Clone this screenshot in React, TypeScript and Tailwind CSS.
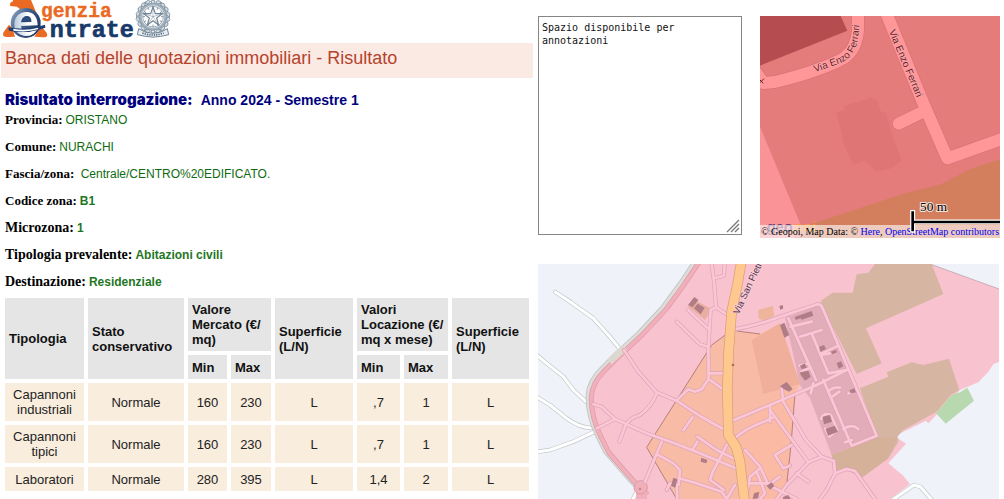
import React from "react";

type Field = { label: string; value: string; strong?: boolean; large?: boolean };

const fields: Field[] = [
  { label: "Provincia:", value: "ORISTANO" },
  { label: "Comune:", value: "NURACHI" },
  { label: "Fascia/zona:", value: "\u00a0Centrale/CENTRO%20EDIFICATO." },
  { label: "Codice zona:", value: "B1", strong: true },
  { label: "Microzona:", value: "1", strong: true, large: true },
  { label: "Tipologia prevalente:", value: "Abitazioni civili", strong: true, large: true },
  { label: "Destinazione:", value: "Residenziale", strong: true, large: true },
];

const rows: string[][] = [
  ["Capannoni industriali", "Normale", "160", "230", "L", ",7", "1", "L"],
  ["Capannoni tipici", "Normale", "160", "230", "L", ",7", "1", "L"],
  ["Laboratori", "Normale", "280", "395", "L", "1,4", "2", "L"],
];

const spokes = [0, 30, 60, 90, 120, 150, 180, 210, 240, 270, 300, 330];
const leaves = [20, 40, 60, 80, 100, 120, 140, 160];

function Logo() {
  return (
    <svg viewBox="0 0 600 129" className="block h-[43px] w-[200px]" role="img" aria-label="Agenzia Entrate">
      <defs>
        <linearGradient id="ball" x1="0" y1="0" x2="1" y2="0.6">
          <stop offset="0" stopColor="#9db0c6" />
          <stop offset="0.45" stopColor="#46648f" />
          <stop offset="1" stopColor="#1b3566" />
        </linearGradient>
        <linearGradient id="shine" x1="0" y1="0" x2="1" y2="0">
          <stop offset="0" stopColor="#b9cadb" />
          <stop offset="0.6" stopColor="#ffffff" />
        </linearGradient>
      </defs>
      <path d="M36 0H90L104 34L120 64L104 58L88 30L60 30L48 20L28 18Q24 8 36 4Z" fill="#ea6a24" />
      <path d="M24 74L8 96Q0 112 22 111L42 110L34 84Z" fill="#ea6a24" />
      <path d="M118 76L137 98Q144 113 124 112L100 110L112 92Z" fill="#ea6a24" />
      <circle cx="74" cy="69" r="45" fill="url(#ball)" />
      <path d="M40 74C40 46 60 34 80 36C100 38 110 54 110 76L60 78C62 92 72 97 84 96C92 95 98 91 101 87L109 88C100 104 88 108 76 108C54 107 40 94 40 74Z" fill="url(#shine)" />
      <path d="M60 67C62 52 72 47 80 48C88 49 92 57 91 66Z" fill="#2b4a7a" />
      <path d="M22 82Q72 92 132 74L133 83Q76 103 24 92Z" fill="#1d3d70" />
      <path d="M36 86Q74 93 112 83L111 88Q76 98 38 92Z" fill="#ffffff" />
      <g fontFamily="'Liberation Mono', monospace" fontWeight="700">
        <text x="120" y="52" fontSize="59" fill="#ea6a24" stroke="#ea6a24">genzia</text>
        <text x="146" y="111" fontSize="70" fill="#183a6b" stroke="#183a6b" strokeWidth="2">ntrate</text>
      </g>
      <g transform="translate(456 50)" fill="none" stroke="#6f8496">
        <circle r="37" strokeWidth="7" stroke="#a6b4bf" />
        <circle r="41" strokeWidth="2" />
        <circle r="31" strokeWidth="2" />
        {spokes.map((a) => (
          <path key={a} transform={`rotate(${a})`} d="M-4 -40V-49H4V-40M0 -31V-24" strokeWidth="2.5" />
        ))}
        {leaves.map((a) => (
          <g key={a} strokeWidth="2">
            <path transform={`rotate(${a})`} d="M-8 -44Q0 -58 9 -45Q0 -38 -8 -44" fill="#d3dce2" />
            <path transform={`rotate(${-a})`} d="M-8 -44Q0 -58 9 -45Q0 -38 -8 -44" fill="#d3dce2" />
          </g>
        ))}
        <path d="M0 -29L7 -9L28 -9L11 4L17 25L0 12L-17 25L-11 4L-28 -9L-7 -9Z" fill="#ffffff" strokeWidth="3.5" />
        <path d="M0 -29V0L17 25M0 0L-17 25M0 0L28 -9M0 0L-28 -9" strokeWidth="1.5" />
        <path d="M-43 36L-24 46Q0 54 24 46L43 36L47 54L23 59Q0 64 -23 59L-47 54Z" fill="#e6ecf0" strokeWidth="3" />
        <path d="M-32 49Q0 61 32 49" strokeWidth="5" strokeDasharray="4 3" stroke="#50687c" />
      </g>
    </svg>
  );
}

function DetailMap() {
  return (
    <figure className="relative self-start overflow-hidden">
      <svg viewBox="30 18 720 666" className="block w-full" aria-label="Mappa di dettaglio">
        <rect x="30" y="18" width="720" height="666" fill="#e47c7c" />
        <path d="M30 18H272L292 62L30 167Z" fill="#b54c4f" />
        <path d="M30 350L150 640L130 684H30Z" fill="#fa9397" />
        <path d="M750 448L660 478L570 524L470 548L160 650V684H750Z" fill="#d37e5d" />
        <path d="M258 308L285 298L282 288L352 268L358 262L380 272L392 304L408 310L428 378L455 452L425 475L380 484L345 452L310 463L282 405L270 350Z" fill="#df7675" />
        <g fill="none" strokeLinejoin="round" strokeLinecap="round">
          <g stroke="#d87077" strokeWidth="40">
            <path d="M324 0V60Q320 115 285 142Q220 180 75 216L40 219L20 190" />
            <path d="M405 0L520 280L592 445L770 382M520 305L446 341" />
          </g>
          <g stroke="#ff9799" strokeWidth="36">
            <path d="M324 0V60Q320 115 285 142Q220 180 75 216L40 219L20 190" />
            <path d="M405 0L520 280L592 445L770 382M520 305L446 341" />
          </g>
        </g>
        <path id="curve-west" d="M195 187L270 160Q314 140 323 92L333 10" fill="none" />
        <path id="curve-east" d="M416 64L520 310" fill="none" />
        <g fontFamily="'Liberation Sans', sans-serif" fontSize="30" fill="#64202b" stroke="#ffb0b0" strokeWidth="3" paintOrder="stroke">
          <text><textPath href="#curve-west">Via Enzo Ferrari</textPath></text>
          <text><textPath href="#curve-east">Via Enzo Ferrari</textPath></text>
        </g>
        <path d="M28 208L40 220M30 218L42 206" stroke="#64202b" strokeWidth="3" />
        <g fontFamily="'Liberation Sans', sans-serif" fontSize="44" fontWeight="700">
          <text x="50" y="667" fill="#6b3f6c">geo</text>
          <text x="132" y="667" fill="#f09a3e">poi</text>
        </g>
      </svg>
      <figcaption className="absolute inset-x-0 bottom-0 bg-white/60 text-center font-['Liberation_Serif',serif] text-[10px] leading-[13px] whitespace-nowrap text-black">
        © Geopoi, Map Data: © <a href="#here" className="text-[#0000ee]">Here</a>,{" "}
        <a href="#openstreetmap" className="text-[#0000ee]">OpenStreetMap contributors</a>
      </figcaption>
      <svg viewBox="30 18 720 666" className="pointer-events-none absolute inset-0 w-full" aria-hidden="true">
        <g fill="none">
          <path d="M488 600V668M488 636H760" stroke="#ffffff" strokeWidth="15" />
          <path d="M488 604V664M488 636H760" stroke="#000000" strokeWidth="8" />
        </g>
        <text x="510" y="602" fontFamily="'Liberation Serif', serif" fontSize="40" stroke="#ffffff" strokeWidth="6" strokeOpacity="0.75" paintOrder="stroke">50 m</text>
      </svg>
    </figure>
  );
}

const ruralRoads = [
  "M76 111L120 140L190 190L235 240L268 280",
  "M10 292L50 325L100 365L130 405L168 440",
  "M10 420L60 450L110 490Q150 520 190 519",
  "M10 592L60 585L130 560L200 527",
  "M1080 740L1152 690L1172 696L1210 740",
  "M318 715L305 740",
];

const townRoads = [
  "M282 285L325 350L380 412L440 437L510 483L590 528",
  "M190 448L215 455L255 492L350 535L440 567L510 595L630 645",
  "M200 520L255 492M380 415Q365 455 330 480Q295 490 285 515L268 560",
  "M545 27L552 80L558 157L590 178M552 70L582 62L584 27",
  "M558 157L542 165L535 280L536 372L515 403L495 410L474 403L440 437",
  "M536 372L575 400M538 355H580M474 165L535 222M440 200L510 268L535 275",
  "M488 487L460 526M395 560L345 680M385 600L430 625L450 645L446 690L420 685L410 705",
  "M446 670L500 685L575 710L590 732M440 690L442 732",
  "M502 545L560 585L610 610M502 560L490 580M590 570L575 600L548 650L540 675L582 705",
  "M615 690L590 732M612 495L720 450L860 390L950 345",
  "M615 550Q640 525 690 505L728 488M720 452V500",
  "M615 222Q670 215 750 185L862 148Q873 146 878 160L1040 542L965 572L880 375",
  "M775 190L858 375M782 215L845 200M810 245L875 225M845 235L895 355M870 298L925 272",
  "M874 299L900 295M895 355L950 345M808 332L835 326M812 350L842 338",
  "M755 400L760 440L828 555L875 605L912 618L915 655L890 705L870 732",
  "M875 605L835 622L720 465M835 622L770 690L740 732M800 655L835 680",
  "M780 632L760 640L735 600L785 570",
  "M645 585L690 635L715 690L800 732M645 685H720M690 640L660 665L650 720",
  "M680 650L705 715L690 732M715 690L750 665",
  "M915 655L950 642L975 648L1005 690L1035 732",
  "M850 385L842 415M895 410Q905 395 930 398M908 424L928 410M955 416L978 404",
  "M873 492Q880 472 903 480L922 525L898 545L885 520",
  "M940 522Q965 505 985 522M945 562L965 555",
];

const buildings = [
  "M474 150L493 126L505 135L488 157Z",
  "M492 160L503 146L524 158L512 178Z",
  "M514 608L532 615L529 625L512 620Z",
  "M430 668L442 673L436 698L423 692Z",
  "M672 715L688 710L684 730L668 732Z",
  "M748 153L758 150L760 160L751 165Z",
  "M794 186L845 168L850 182L815 194L812 190L797 195Z",
  "M750 210L763 203L778 240L763 248Z",
  "M868 275L882 270L888 282L870 290Z",
  "M903 290L918 284L921 292L907 298Z",
  "M920 324L933 319L940 334L926 341Z",
  "M810 332L825 325L830 338L815 342Z",
  "M810 352L835 347L842 366L825 377L812 360Z",
  "M750 394L770 381L788 402L778 410L765 404Z",
  "M958 406L974 400L978 412L962 415Z",
  "M878 485L900 480L906 500L882 508Z",
  "M887 522L914 512L924 530L894 542Z",
  "M710 692L725 682L733 693L720 704Z",
  "M760 725L775 720L782 732H758Z",
];

function Roads({ list, casing, fill, width }: { list: string[]; casing: string; fill: string; width: number }) {
  return (
    <g fill="none" strokeLinecap="round" strokeLinejoin="round">
      {list.map((d) => (
        <path key={d} d={d} stroke={casing} strokeWidth={width + 4} />
      ))}
      {list.map((d) => (
        <path key={d} d={d} stroke={fill} strokeWidth={width} />
      ))}
    </g>
  );
}

function ZoneMap() {
  const belt = "M505 10L455 85L400 160L330 235L255 305L215 345Q180 380 177 420Q175 480 205 540L230 590L300 670L345 715";
  const main = "M636 10L622 90L605 170L596 290L592 400L595 540L618 575L630 620L645 750";
  return (
    <svg viewBox="24 27 1383 705" className="block w-full" aria-label="Mappa della zona omogenea">
      <rect x="24" y="27" width="1383" height="705" fill="#eff2f9" />
      <Roads list={ruralRoads} casing="#c3c7c9" fill="#ffffff" width={9} />
      <path
        d="M508 27L455 95L400 165L330 240L255 310L205 355Q178 390 177 440Q180 490 205 545L230 595L300 675L345 732H1080L1140 688L1120 662L1075 625L1128 566L1102 548L1105 538L1188 497L1195 505L1290 405L1345 382L1375 350L1390 328L1407 320V102L1200 27Z"
        fill="#f8c3cf"
      />
      <path d="M1200 27L1407 102" stroke="#c9aebb" strokeWidth="3" />
      <path d="M590 237L545 270L350 577L440 732H740L770 690L783 570L795 415L810 390L750 205L690 237L610 228Z" fill="#f8bba6" />
      <path d="M690 440L795 400L783 570L770 690L750 732H640L620 560Z" fill="#fabaa3" />
      <path d="M590 237L545 270L350 577L440 732M770 690L783 570L795 415M690 237L620 228" fill="none" stroke="#b77f7c" strokeWidth="3" />
      <path d="M665 255L750 205L810 387L700 417Z" fill="#f0af9b" />
      <path d="M685 165L728 152L733 182L700 198L685 188Z" fill="#efb49c" />
      <path d="M488 132L545 162L525 195L474 155Z" fill="#e8ae9f" />
      <path d="M765 188L870 150L1040 545L905 600L840 430L810 390Z" fill="#e2acb9" />
      <path d="M873 137L908 113H968L980 58L1015 53L1035 27H1205L1240 117L1008 220L1055 325L980 357L880 160Z" fill="#d6b5a3" />
      <path d="M990 400L1075 365L1070 352L1145 322L1180 330L1257 311L1288 405L1262 420L1220 470L1120 525L1102 545L1105 560L1075 610L995 668L945 640L915 655L905 600L1040 545Z" fill="#d6b5a3" />
      <path d="M905 600L1040 548L1102 548L1075 610L995 668L945 640L915 655Z" fill="#d4b198" />
      <path d="M1218 475L1265 420L1290 412L1312 398L1332 437L1247 506Z" fill="#b8d9b0" />
      <g fill="none" strokeLinejoin="round">
        <path d={belt} stroke="#c2c3c1" strokeWidth="20" />
        <path d={belt} stroke="#dddeda" strokeWidth="15" />
        <path d={belt} transform="translate(7 4)" stroke="#dc99a9" strokeWidth="15" />
        <path d={belt} transform="translate(7 4)" stroke="#f1afba" strokeWidth="11" />
        <path d="M285 277L238 320" stroke="#dcd7cf" strokeWidth="20" />
      </g>
      <path d="M318 732V680L345 685L352 732Z" fill="#f1afba" />
      <circle cx="332" cy="697" r="20" fill="#f1afba" stroke="#dc99a9" strokeWidth="3" />
      <circle cx="330" cy="702" r="4" fill="#c98795" />
      <Roads list={townRoads} casing="#dda2b8" fill="#fbc7d4" width={8} />
      <g fill="none" strokeLinejoin="round">
        <path d={main} stroke="#d99b78" strokeWidth="31" />
        <path d={main} stroke="#fec88e" strokeWidth="27" />
      </g>
      <g fill="#b07c86">
        {buildings.map((d) => (
          <path key={d} d={d} />
        ))}
      </g>
      <circle cx="609" cy="330" r="4" fill="#a96c55" />
      <text
        transform="translate(626 180) rotate(-65)"
        fontFamily="'Liberation Sans', sans-serif"
        fontSize="29"
        fill="#54304a"
        stroke="#fbd3dc"
        strokeWidth="4"
        paintOrder="stroke"
      >
        Via San Pietro
      </text>
    </svg>
  );
}

function QuotationTable() {
  const head = "bg-[#e5e5e5] px-1 py-1 text-left font-bold";
  return (
    <table className="w-full table-fixed border-separate border-spacing-1 text-[13px] leading-[15px] text-[#111]">
      <colgroup>
        <col className="w-[79px]" />
        <col className="w-[96px]" />
        <col className="w-[39px]" />
        <col className="w-[40px]" />
        <col className="w-[78px]" />
        <col className="w-[43px]" />
        <col className="w-[44px]" />
        <col className="w-[77px]" />
      </colgroup>
      <thead>
        <tr className="h-[53px]">
          <th rowSpan={2} className={head}>Tipologia</th>
          <th rowSpan={2} className={head}>Stato conservativo</th>
          <th colSpan={2} className={head}>Valore Mercato (€/<wbr />mq)</th>
          <th rowSpan={2} className={head}>Superficie (L/N)</th>
          <th colSpan={2} className={head}>Valori Locazione (€/<wbr />mq x mese)</th>
          <th rowSpan={2} className={head}>Superficie (L/N)</th>
        </tr>
        <tr className="h-6">
          <th className={head}>Min</th>
          <th className={head}>Max</th>
          <th className={head}>Min</th>
          <th className={head}>Max</th>
        </tr>
      </thead>
      <tbody className="text-center text-[#222]">
        {rows.map((row) => (
          <tr key={row[0]} className="h-6">
            {row.map((cell, i) => (
              <td key={i} className="bg-[#f9eddd] px-1 py-1">{cell}</td>
            ))}
          </tr>
        ))}
      </tbody>
    </table>
  );
}

export default function App() {
  return (
    <div className="grid grid-cols-[532fr_462fr] gap-[5px] bg-white pr-1 pl-px font-['Liberation_Sans',sans-serif]">
      <main className="min-w-0">
        <Logo />
        <h1 className="bg-[#fbe9e4] px-1 pb-1 text-[18px] leading-[31px] text-[#b5432b]">
          Banca dati delle quotazioni immobiliari - Risultato
        </h1>
        <h2 className="flex items-baseline gap-2 px-1 pt-3 text-[14px] leading-5 font-bold text-[#00007f]">
          <span className="font-['Inter',sans-serif] text-[15px] font-black">Risultato interrogazione:</span>
          <span>Anno 2024 - Semestre 1</span>
        </h2>
        <dl className="px-1 pt-[2px] pb-1">
          {fields.map((f) => (
            <div key={f.label} className="flex items-baseline gap-[3px] pb-[11px] leading-4 last:pb-0">
              <dt className={f.large ? "font-['Liberation_Serif',serif] text-[14px] font-bold text-black" : "font-['Liberation_Serif',serif] text-[13px] font-bold text-black"}>
                {f.label}
              </dt>
              <dd className={f.strong ? "text-[12px] font-bold text-[#1f771f]" : "text-[12px] text-[#0f6b0f]"}>{f.value}</dd>
            </div>
          ))}
        </dl>
        <QuotationTable />
      </main>
      <aside className="min-w-0 pt-4">
        <div className="grid grid-cols-[204fr_240fr] gap-[18px]">
          <div className="relative mb-[3px]">
            <textarea
              aria-label="Annotazioni"
              defaultValue="Spazio disponibile per annotazioni"
              className="block h-full w-full resize-none rounded-none border border-[#858585] bg-white px-[3px] py-1 font-['DejaVu_Sans_Mono',monospace] text-[10px] leading-[13px] text-[#111]"
            />
            <svg viewBox="0 0 14 14" className="pointer-events-none absolute right-[2px] bottom-[2px] size-[14px]" aria-hidden="true">
              <path d="M1 13L13 1M5 13L13 5M9 13L13 9" stroke="#777" strokeWidth="1.3" />
            </svg>
          </div>
          <DetailMap />
        </div>
        <div className="pt-[26px] pr-px">
          <ZoneMap />
        </div>
      </aside>
    </div>
  );
}
